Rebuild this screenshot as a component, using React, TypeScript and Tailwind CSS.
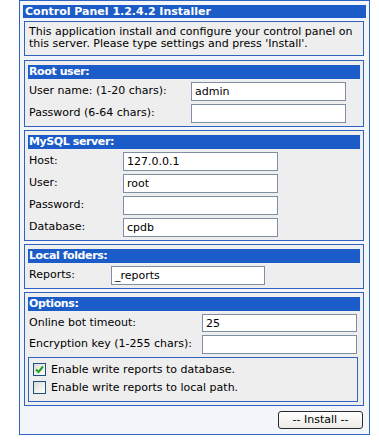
const font = { fontFamily: '"DejaVu Sans", Verdana, sans-serif' }

function Section({ title, children, className = '' }: { title: string; children: React.ReactNode; className?: string }) {
  return (
    <div className={`ml-[1px] mr-[2px] border border-[#2f63bd] bg-[#eeeeee] px-[3px] pt-[4px] pb-[3px] ${className}`}>
      <div className="h-[14px] bg-[#1c5cc8] pl-[1px] text-[11px] font-bold leading-[14px] tracking-[-0.4px] text-white">{title}</div>
      <div className="mt-[3px] flex flex-col gap-[3px]">{children}</div>
    </div>
  )
}

function Row({ label, value = '', labelW, inputW, h = 19 }: { label: string; value?: string; labelW: string; inputW: string; h?: number }) {
  return (
    <div className="flex items-center">
      <span className={`${labelW} shrink-0 pl-[1px] text-[11px] text-black`}>{label}</span>
      <div
        className={`${inputW} ${h === 18 ? 'h-[18px]' : 'h-[19px]'} border border-[#7f8ea3] bg-white pl-[3px] text-[11px] leading-[17px] text-black`}
      >
        {value}
      </div>
    </div>
  )
}

function Check({ checked, label }: { checked?: boolean; label: string }) {
  return (
    <div className="flex h-[13px] items-center gap-[5px]">
      <span className="flex h-[13px] w-[13px] items-center justify-center border border-[#1c5180] bg-gradient-to-br from-[#dcdcd6] to-white">
        {checked && (
          <svg width="9" height="9" viewBox="0 0 9 9">
            <path d="M1 4.5 L3.5 7 L8 1.5" fill="none" stroke="#21a121" strokeWidth="2" />
          </svg>
        )}
      </span>
      <span className="text-[11px] leading-[13px] text-black">{label}</span>
    </div>
  )
}

export default function App() {
  return (
    <div className="h-[444px] w-[379px] bg-white" style={font}>
      <div className="ml-[19px] w-[351px] border border-[#2f63bd] bg-[#f2f6fb] px-[3px] pt-[4px] pb-[5px]">
        <div className="h-[13px] bg-[#1c5cc8] pl-[2px] text-[11px] font-bold leading-[13px] text-white">
          Control Panel 1.2.4.2 Installer
        </div>

        <div className="ml-[1px] mr-[2px] mt-[3px] h-[35px] border border-[#2f63bd] bg-[#eeeeee] pl-[4px] pt-[4px] text-[11px] leading-[12px] text-black">
          This application install and configure your control panel on this server. Please type settings and press 'Install'.
        </div>

        <Section title="Root user:" className="mt-[4px]">
          <Row label="User name: (1-20 chars):" value="admin" labelW="w-[163px]" inputW="w-[155px]" />
          <Row label="Password (6-64 chars):" labelW="w-[163px]" inputW="w-[155px]" />
        </Section>

        <Section title="MySQL server:" className="mt-[3px]">
          <Row label="Host:" value="127.0.0.1" labelW="w-[95px]" inputW="w-[155px]" />
          <Row label="User:" value="root" labelW="w-[95px]" inputW="w-[155px]" />
          <Row label="Password:" labelW="w-[95px]" inputW="w-[155px]" />
          <Row label="Database:" value="cpdb" labelW="w-[95px]" inputW="w-[155px]" />
        </Section>

        <Section title="Local folders:" className="mt-[3px]">
          <Row label="Reports:" value="_reports" labelW="w-[83px]" inputW="w-[154px]" />
        </Section>

        <Section title="Options:" className="mt-[3px]">
          <Row label="Online bot timeout:" value="25" labelW="w-[174px]" inputW="w-[155px]" h={18} />
          <Row label="Encryption key (1-255 chars):" labelW="w-[174px]" inputW="w-[155px]" />
          <div className="mr-[2px] flex h-[45px] flex-col gap-[5px] border border-[#2f63bd] bg-[#eeeeee] px-[4px] pt-[5px]">
            <Check checked label="Enable write reports to database." />
            <Check label="Enable write reports to local path." />
          </div>
        </Section>

        <div className="mt-[5px] flex justify-end pr-[3px]">
          <button className="h-[18px] w-[85px] rounded-[3px] border border-[#2b2b2b] bg-gradient-to-b from-white to-[#ecebe6] text-[11px] leading-[16px] text-black">
            -- Install --
          </button>
        </div>
      </div>
    </div>
  )
}
